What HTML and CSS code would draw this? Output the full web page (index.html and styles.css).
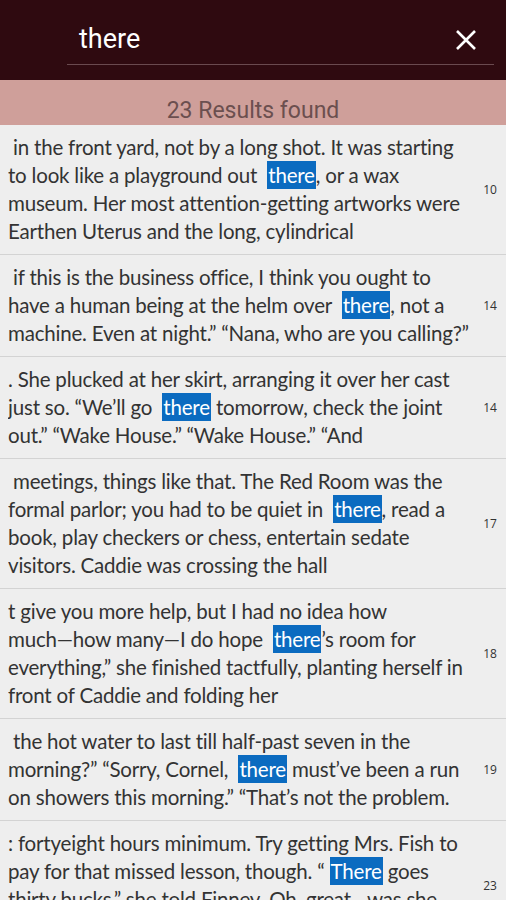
FILE: index.html
```html
<!DOCTYPE html>
<html>
<head>
<meta charset="utf-8">
<link rel="stylesheet" href="styles.css">
</head>
<body>
<div class="app">
  <header class="topbar">
    <div class="search">
      <span class="query">there</span>
      <svg class="close" width="22" height="22" viewBox="0 0 22 22"><path d="M2 2L20 20M20 2L2 20" stroke="#fff" stroke-width="2.6" fill="none"/></svg>
    </div>
  </header>
  <div class="count">23 Results found</div>
  <ul class="results">
    <li class="item"><p class="snip">&nbsp;in the front yard, not by a long shot. It was starting<br>to look like a playground out &nbsp;<mark>there</mark>, or a wax<br>museum. Her most attention-getting artworks were<br>Earthen Uterus and the long, cylindrical</p><span class="page">10</span></li>
    <li class="item"><p class="snip">&nbsp;if this is the business office, I think you ought to<br>have a human being at the helm over &nbsp;<mark>there</mark>, not a<br>machine. Even at night.” “Nana, who are you calling?”</p><span class="page">14</span></li>
    <li class="item"><p class="snip">. She plucked at her skirt, arranging it over her cast<br>just so. “We’ll go &nbsp;<mark>there</mark> tomorrow, check the joint<br>out.” “Wake House.” “Wake House.” “And</p><span class="page">14</span></li>
    <li class="item"><p class="snip">&nbsp;meetings, things like that. The Red Room was the<br>formal parlor; you had to be quiet in &nbsp;<mark>there</mark>, read a<br>book, play checkers or chess, entertain sedate<br>visitors. Caddie was crossing the hall</p><span class="page">17</span></li>
    <li class="item"><p class="snip">t give you more help, but I had no idea how<br>much—how many—I do hope &nbsp;<mark>there</mark>’s room for<br>everything,” she finished tactfully, planting herself in<br>front of Caddie and folding her</p><span class="page">18</span></li>
    <li class="item"><p class="snip">&nbsp;the hot water to last till half-past seven in the<br>morning?” “Sorry, Cornel, &nbsp;<mark>there</mark> must’ve been a run<br>on showers this morning.” “That’s not the problem.</p><span class="page">19</span></li>
    <li class="item"><p class="snip">: fortyeight hours minimum. Try getting Mrs. Fish to<br>pay for that missed lesson, though. “ <mark>There</mark> goes<br>thirty bucks,” she told Finney. Oh, great—was she<br>supposed to pay for it herself</p><span class="page">23</span></li>
  </ul>
</div>
</body>
</html>
```
FILE: styles.css
```css
html, body {
  margin: 0;
  padding: 0;
  background: #eeeeee;
}
.app {
  width: 506px;
  height: 900px;
  overflow: hidden;
  background: #eeeeee;
}
.topbar {
  height: 80px;
  background: #2f0a10;
  box-sizing: border-box;
  padding: 0 12px 0 67px;
}
.search {
  height: 65px;
  border-bottom: 1px solid #6a4a4f;
  display: flex;
  align-items: center;
  justify-content: space-between;
  padding: 17px 17px 0 12px;
  box-sizing: border-box;
}
.query {
  font-family: Roboto, "Noto Sans", sans-serif;
  font-size: 27px;
  color: #ffffff;
  margin-top: -4px;
}
.close {
  margin-top: -2px;
}
.count {
  height: 45px;
  background: #cf9f9a;
  font-family: Roboto, "Noto Sans", sans-serif;
  font-size: 23px;
  color: #6b4f4f;
  text-align: center;
  line-height: 62px;
  overflow: hidden;
}
.results {
  list-style: none;
  margin: 0;
  padding: 0;
}
.item {
  display: flex;
  align-items: center;
  border-bottom: 1px solid #d3d3d3;
  padding: 8px 0 9px 8px;
}
.snip {
  flex: 1;
  margin: 0;
  font-family: Lato, "Open Sans", sans-serif;
  font-size: 20.5px;
  letter-spacing: -0.2px;
  line-height: 28px;
  color: #333333;
  white-space: nowrap;
  overflow: hidden;
}
mark {
  background: #0b6bc0;
  color: #ffffff;
  padding: 2px 1px;
}
.page {
  width: 32px;
  text-align: center;
  font-family: "Open Sans", sans-serif;
  font-size: 12px;
  color: #333333;
}
```
